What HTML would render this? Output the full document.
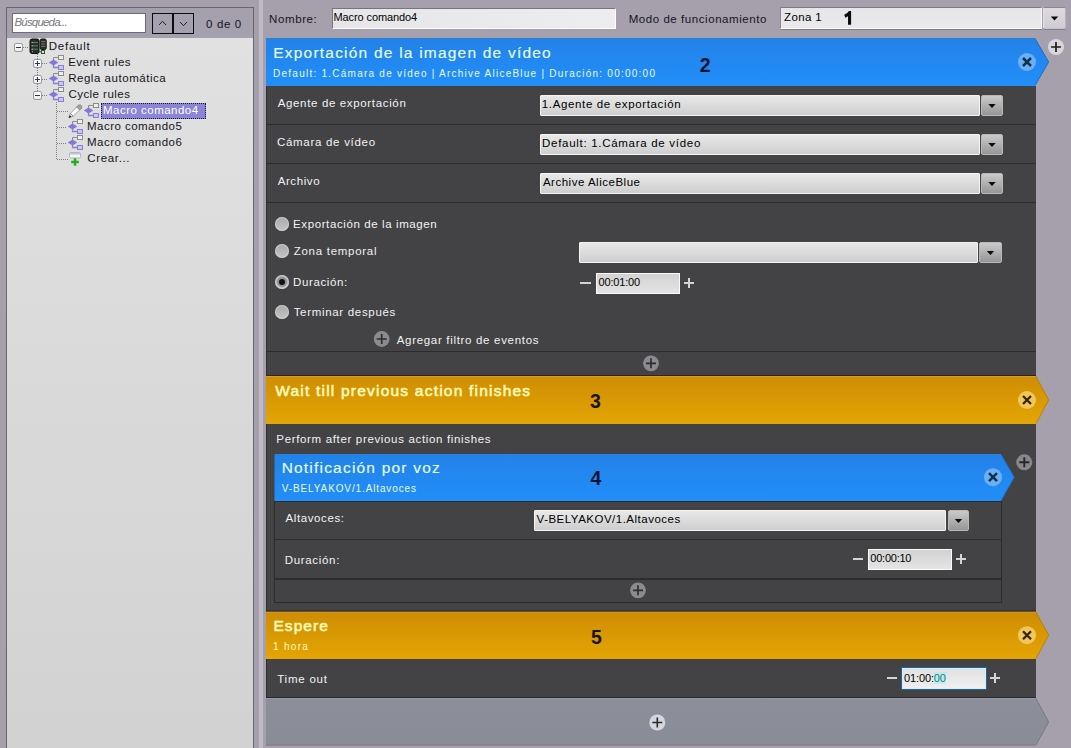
<!DOCTYPE html>
<html><head><meta charset="utf-8"><title>Macro</title>
<style>
html,body{margin:0;padding:0;}
body{width:1071px;height:748px;overflow:hidden;position:relative;background:#a5a0ac;font-family:"Liberation Sans", sans-serif;}
.t{position:absolute;white-space:pre;line-height:1;font-family:"Liberation Sans", sans-serif;}
.a{position:absolute;}

.band{background:#a4a0ad;}
.tree{background:linear-gradient(#e1e1e1,#d2d2d2);}
.inp{background:linear-gradient(90deg,#e6e6e8,#ededef);border:1px solid;border-color:#77747f #fdfdfd #fdfdfd #77747f;box-sizing:border-box;}
.cb{background:linear-gradient(#e8e8e8,#cecece);box-sizing:border-box;border:1px solid #f4f4f4;border-radius:1px;}
.cbb{background:linear-gradient(#cacaca,#969696);box-sizing:border-box;border:1px solid #b8b8b8;border-radius:2px;}
.cbl{background:linear-gradient(#e6e6e8,#eaeaec);box-sizing:border-box;border:1px solid;border-color:#7d7a85 #fdfdfd #fdfdfd #8a8792;border-radius:1px;box-shadow:0 1px 0 rgba(100,98,110,.55);}
.cblb{background:linear-gradient(#dddbe0,#cfcdd3);box-sizing:border-box;border:1px solid;border-color:#8a8792 #b9b6c0 #c4c2ca #e4e2e8;border-radius:2px;box-shadow:0 1px 0 rgba(100,98,110,.55);}
.sep{background:#2d2d2f;height:1px;}
.fld{background:linear-gradient(#d2d2d2,#e4e4e4);box-sizing:border-box;border:1px solid #fafafa;}
.eb{box-sizing:border-box;width:9px;height:9px;border:1px solid #9a9aa0;border-radius:2px;background:linear-gradient(#ffffff,#ececec);}
.dotv{width:1px;background-image:linear-gradient(#808080 50%,transparent 50%);background-size:1px 2px;}
.doth{height:1px;background-image:linear-gradient(90deg,#808080 50%,transparent 50%);background-size:2px 1px;}

</style></head><body>
<div class="a " style="left:6px;top:7px;width:248px;height:741px;background:#68656f;"></div>
<div class="a band" style="left:7px;top:8px;width:246px;height:30px;"></div>
<div class="a tree" style="left:7px;top:38px;width:246px;height:710px;"></div>
<div class="a " style="left:12px;top:13px;width:134px;height:20px;background:#fff;box-sizing:border-box;border:1px solid #6c6a74;"></div>
<div class="a " style="left:152px;top:13px;width:21px;height:21px;box-sizing:border-box;border:1px solid #0c0c10;background:#a5a1ae;"></div>
<div class="a " style="left:173px;top:13px;width:21px;height:21px;box-sizing:border-box;border:1px solid #0c0c10;background:#a5a1ae;"></div>
<svg class="a" style="left:0px;top:0px" width="1071" height="748" viewBox="0 0 1071 748"><path d="M159 25L162.5 21.3L166 25" stroke="#111" stroke-width="0.9" fill="none"/><path d="M180 22L183.5 25.7L187 22" stroke="#111" stroke-width="0.9" fill="none"/></svg>
<div class="a " style="left:259px;top:0px;width:4px;height:748px;background:#bfbcc8;"></div>
<div class="a doth" style="left:23px;top:47px;width:6px;height:1px;"></div>
<div class="a dotv" style="left:37px;top:54px;width:1px;height:38px;"></div>
<div class="a doth" style="left:42px;top:63px;width:6px;height:1px;"></div>
<div class="a doth" style="left:42px;top:79px;width:6px;height:1px;"></div>
<div class="a doth" style="left:42px;top:95px;width:6px;height:1px;"></div>
<div class="a dotv" style="left:56px;top:102px;width:1px;height:58px;"></div>
<div class="a doth" style="left:57px;top:111px;width:11px;height:1px;"></div>
<div class="a doth" style="left:57px;top:127px;width:10px;height:1px;"></div>
<div class="a doth" style="left:57px;top:143px;width:10px;height:1px;"></div>
<div class="a doth" style="left:57px;top:159px;width:11px;height:1px;"></div>
<div class="a eb" style="left:14px;top:43px;width:9px;height:9px;"></div><div class="a" style="left:16px;top:47px;width:5px;height:1px;background:#2c3a58"></div>
<div class="a eb" style="left:33px;top:59px;width:9px;height:9px;"></div><div class="a" style="left:35px;top:63px;width:5px;height:1px;background:#2c3a58"></div><div class="a" style="left:37px;top:61px;width:1px;height:5px;background:#2c3a58"></div>
<div class="a eb" style="left:33px;top:75px;width:9px;height:9px;"></div><div class="a" style="left:35px;top:79px;width:5px;height:1px;background:#2c3a58"></div><div class="a" style="left:37px;top:77px;width:1px;height:5px;background:#2c3a58"></div>
<div class="a eb" style="left:33px;top:91px;width:9px;height:9px;"></div><div class="a" style="left:35px;top:95px;width:5px;height:1px;background:#2c3a58"></div>
<svg class="a" style="left:28.8px;top:38px" width="18" height="17" viewBox="0 0 18 17"><rect x="1" y="1" width="9" height="14.5" rx="2" fill="#2a2e2a" stroke="#0c100c"/><rect x="11.2" y="1" width="6" height="10.5" rx="1.6" fill="#2e322e" stroke="#0c100c"/><path d="M2 4.5H9M2 7.8H9M2 11.2H9" stroke="#6e786e" stroke-width="1"/><path d="M12 3.6H16.5M12 6H16.5M12 8.4H16.5" stroke="#7e887e" stroke-width=".8"/><path d="M3 4.5h1M3 7.8h1M3 11.2h1M3 13.8h1" stroke="#7cd67c" stroke-width="1"/><path d="M10 13.8H12.5" stroke="#1e5e1e" stroke-width="1"/><rect x="12.5" y="12.5" width="3" height="3" fill="#d8f0d8" stroke="#1c5c1c"/></svg>
<svg class="a" style="left:48px;top:55px" width="17" height="16" viewBox="0 0 17 16"><path d="M5.5 5V2.5H10.5" stroke="#8e8e94" stroke-width="1" fill="none"/><path d="M5.5 10V12.5H10.5" stroke="#8a80d4" stroke-width="1.3" fill="none"/><path d="M0.7 7.5L5.5 4.4L10.3 7.5L5.5 10.6Z" fill="#8279d6"/><rect x="10.5" y="0.5" width="5" height="4" fill="#eeeeea" stroke="#8c8c90"/><rect x="10.5" y="10.5" width="5" height="4" fill="#cac2ff" stroke="#8a80d4"/></svg>
<svg class="a" style="left:48px;top:71px" width="17" height="16" viewBox="0 0 17 16"><path d="M5.5 5V2.5H10.5" stroke="#8e8e94" stroke-width="1" fill="none"/><path d="M5.5 10V12.5H10.5" stroke="#8a80d4" stroke-width="1.3" fill="none"/><path d="M0.7 7.5L5.5 4.4L10.3 7.5L5.5 10.6Z" fill="#8279d6"/><rect x="10.5" y="0.5" width="5" height="4" fill="#eeeeea" stroke="#8c8c90"/><rect x="10.5" y="10.5" width="5" height="4" fill="#cac2ff" stroke="#8a80d4"/></svg>
<svg class="a" style="left:48px;top:87px" width="17" height="16" viewBox="0 0 17 16"><path d="M5.5 5V2.5H10.5" stroke="#8e8e94" stroke-width="1" fill="none"/><path d="M5.5 10V12.5H10.5" stroke="#8a80d4" stroke-width="1.3" fill="none"/><path d="M0.7 7.5L5.5 4.4L10.3 7.5L5.5 10.6Z" fill="#8279d6"/><rect x="10.5" y="0.5" width="5" height="4" fill="#eeeeea" stroke="#8c8c90"/><rect x="10.5" y="10.5" width="5" height="4" fill="#cac2ff" stroke="#8a80d4"/></svg>
<svg class="a" style="left:83px;top:103px" width="17" height="16" viewBox="0 0 17 16"><path d="M5.5 5V2.5H10.5" stroke="#8e8e94" stroke-width="1" fill="none"/><path d="M5.5 10V12.5H10.5" stroke="#8a80d4" stroke-width="1.3" fill="none"/><path d="M0.7 7.5L5.5 4.4L10.3 7.5L5.5 10.6Z" fill="#8279d6"/><rect x="10.5" y="0.5" width="5" height="4" fill="#eeeeea" stroke="#8c8c90"/><rect x="10.5" y="10.5" width="5" height="4" fill="#cac2ff" stroke="#8a80d4"/></svg>
<svg class="a" style="left:67px;top:119px" width="17" height="16" viewBox="0 0 17 16"><path d="M5.5 5V2.5H10.5" stroke="#8e8e94" stroke-width="1" fill="none"/><path d="M5.5 10V12.5H10.5" stroke="#8a80d4" stroke-width="1.3" fill="none"/><path d="M0.7 7.5L5.5 4.4L10.3 7.5L5.5 10.6Z" fill="#8279d6"/><rect x="10.5" y="0.5" width="5" height="4" fill="#eeeeea" stroke="#8c8c90"/><rect x="10.5" y="10.5" width="5" height="4" fill="#cac2ff" stroke="#8a80d4"/></svg>
<svg class="a" style="left:67px;top:135px" width="17" height="16" viewBox="0 0 17 16"><path d="M5.5 5V2.5H10.5" stroke="#8e8e94" stroke-width="1" fill="none"/><path d="M5.5 10V12.5H10.5" stroke="#8a80d4" stroke-width="1.3" fill="none"/><path d="M0.7 7.5L5.5 4.4L10.3 7.5L5.5 10.6Z" fill="#8279d6"/><rect x="10.5" y="0.5" width="5" height="4" fill="#eeeeea" stroke="#8c8c90"/><rect x="10.5" y="10.5" width="5" height="4" fill="#cac2ff" stroke="#8a80d4"/></svg>
<svg class="a" style="left:68px;top:104px" width="15" height="15" viewBox="0 0 15 15"><path d="M2.4 9.4L10.4 1.2L13.4 4.2L5.2 12.2Z" fill="#fafafa" stroke="#8a8a8a" stroke-width=".7"/><path d="M8.6 3L10.4 1.2Q11.8 0 13.2 1.4Q14.4 2.8 13.4 4.2L11.6 6Z" fill="#a2a2a2" stroke="#6e6e6e" stroke-width=".6"/><path d="M0.8 13.8L2.4 9.4L5.2 12.2Z" fill="#e8e8e8" stroke="#555" stroke-width=".5"/><path d="M0.8 13.8L1.7 11.2L3.4 12.9Z" fill="#111"/></svg>
<svg class="a" style="left:67px;top:151px" width="17" height="17" viewBox="0 0 17 17"><rect x="2.5" y="1.5" width="11" height="5.5" rx="1.5" fill="#f4f4f8" stroke="#b4b4c0"/><path d="M3.2 2.8H12.8" stroke="#c4c4d0" stroke-width="1.6"/><path d="M8 7.2V14.8M4.2 11H11.8" stroke="#1eae1e" stroke-width="2.4"/></svg>
<div class="a " style="left:101px;top:103px;width:105px;height:16px;background:#8b85d8;box-sizing:border-box;border:1px dotted #1a1a30;"></div>
<div class="a inp" style="left:332px;top:8px;width:284px;height:21px;"></div>
<div class="a cbl" style="left:780px;top:7px;width:262px;height:22px;"></div><div class="a cblb" style="left:1043px;top:7px;width:23px;height:22px;"></div><svg class="a" style="left:0;top:0" width="1071" height="748"><path d="M1050.8 16.5L1058.2 16.5L1054.5 20.6Z" fill="#0c0c0c"/></svg>
<svg class="a" style="left:0px;top:0px" width="1071" height="748" viewBox="0 0 1071 748"><path d="M848 24.8V16.2L845.3 17.8L844.2 14.8Q847.6 13.4 849 11.1H851.1V24.8Z" fill="#0c0c12"/></svg>
<div class="a " style="left:266px;top:86px;width:770px;height:290px;background:#434345;"></div>
<svg class="a" style="left:0px;top:0px" width="1071" height="748" viewBox="0 0 1071 748"><defs><linearGradient id="bg1" x1="0" y1="0" x2="0" y2="1"><stop offset="0" stop-color="#2382e8"/><stop offset="1" stop-color="#228ef9"/></linearGradient></defs><path d="M266 38H1035L1049 62L1035 86H266Z" fill="url(#bg1)"/><path d="M266 38.5H1035" stroke="#2f7fd0" stroke-width="1"/><path d="M1035 38.5L1048.6 62L1035 85.5" stroke="#1c66bc" stroke-width="1" fill="none" opacity=".8"/><circle cx="1027" cy="62" r="9" fill="#6bb0f4"/><path d="M1023.0 58.0L1031.0 66.0M1031.0 58.0L1023.0 66.0" stroke="#14304e" stroke-width="2.5" stroke-linecap="butt" fill="none"/><circle cx="1056" cy="47" r="8" fill="#d8d6dd"/><path d="M1051.0 47L1061.0 47M1056 42.0L1056 52.0" stroke="#1c1c1c" stroke-width="1.7" fill="none"/></svg>
<div class="a sep" style="left:266px;top:124px;width:770px;height:1px;"></div>
<div class="a sep" style="left:266px;top:163px;width:770px;height:1px;"></div>
<div class="a sep" style="left:266px;top:202px;width:770px;height:1px;"></div>
<div class="a sep" style="left:266px;top:351px;width:770px;height:1px;"></div>
<div class="a cb" style="left:540px;top:95px;width:440px;height:21px;"></div><div class="a cbb" style="left:981px;top:95px;width:22px;height:21px;"></div><svg class="a" style="left:0;top:0" width="1071" height="748"><path d="M988.3 104.0L995.7 104.0L992.0 108.1Z" fill="#0c0c0c"/></svg>
<div class="a cb" style="left:540px;top:134px;width:440px;height:21px;"></div><div class="a cbb" style="left:981px;top:134px;width:22px;height:21px;"></div><svg class="a" style="left:0;top:0" width="1071" height="748"><path d="M988.3 143.0L995.7 143.0L992.0 147.1Z" fill="#0c0c0c"/></svg>
<div class="a cb" style="left:540px;top:173px;width:440px;height:21px;"></div><div class="a cbb" style="left:981px;top:173px;width:22px;height:21px;"></div><svg class="a" style="left:0;top:0" width="1071" height="748"><path d="M988.3 182.0L995.7 182.0L992.0 186.1Z" fill="#0c0c0c"/></svg>
<div class="a" style="left:275px;top:217px;width:14px;height:14px;border-radius:50%;background:linear-gradient(#a9a9a9,#c4c4c4);box-shadow:inset 0 0 0 1px rgba(225,225,225,.55);"></div>
<div class="a" style="left:275px;top:244px;width:14px;height:14px;border-radius:50%;background:linear-gradient(#a9a9a9,#c4c4c4);box-shadow:inset 0 0 0 1px rgba(225,225,225,.55);"></div>
<div class="a" style="left:275px;top:275px;width:14px;height:14px;border-radius:50%;background:linear-gradient(#a9a9a9,#c4c4c4);box-shadow:inset 0 0 0 1px rgba(225,225,225,.55);"></div><div class="a" style="left:277px;top:277px;width:10px;height:10px;border-radius:50%;background:#929292"></div><div class="a" style="left:279px;top:279px;width:6px;height:6px;border-radius:50%;background:#111"></div>
<div class="a" style="left:275px;top:305px;width:14px;height:14px;border-radius:50%;background:linear-gradient(#a9a9a9,#c4c4c4);box-shadow:inset 0 0 0 1px rgba(225,225,225,.55);"></div>
<div class="a cb" style="left:579px;top:242px;width:399px;height:21px;"></div><div class="a cbb" style="left:979px;top:242px;width:23px;height:21px;"></div><svg class="a" style="left:0;top:0" width="1071" height="748"><path d="M986.8 251.0L994.2 251.0L990.5 255.1Z" fill="#0c0c0c"/></svg>
<div class="a fld" style="left:596px;top:273px;width:84px;height:21px;"></div>
<div class="a" style="left:580px;top:282px;width:11px;height:2px;background:#d4d4d4"></div>
<div class="a" style="left:684px;top:282px;width:10px;height:2px;background:#d4d4d4"></div><div class="a" style="left:688.0px;top:278.0px;width:2px;height:10px;background:#d4d4d4"></div>
<svg class="a" style="left:0px;top:0px" width="1071" height="748" viewBox="0 0 1071 748"><circle cx="381.7" cy="339" r="7.9" fill="#8b8b8f"/><path d="M376.7 339L386.7 339M381.7 334.0L381.7 344.0" stroke="#2e2e30" stroke-width="1.7" fill="none"/><circle cx="651" cy="363.3" r="7.9" fill="#8b8b8f"/><path d="M646.0 363.3L656.0 363.3M651 358.3L651 368.3" stroke="#2e2e30" stroke-width="1.7" fill="none"/></svg>
<div class="a " style="left:266px;top:659px;width:770px;height:39px;background:#434345;"></div>
<div class="a " style="left:266px;top:424px;width:770px;height:188px;background:#434345;"></div>
<svg class="a" style="left:0px;top:0px" width="1071" height="748" viewBox="0 0 1071 748"><defs><linearGradient id="og" x1="0" y1="0" x2="0" y2="1"><stop offset="0" stop-color="#ce8d03"/><stop offset="1" stop-color="#e4a505"/></linearGradient><linearGradient id="gg" x1="0" y1="0" x2="0" y2="1"><stop offset="0" stop-color="#8c8e99"/><stop offset="1" stop-color="#8a8c97"/></linearGradient></defs><path d="M266 376H1036L1049 400L1036 424H266Z" fill="url(#og)"/><path d="M266 376.5H1036" stroke="#d9a44a" stroke-width="1" opacity=".75"/><path d="M266 375.5H1036" stroke="#2b2724" stroke-width="1"/><path d="M1036 376.5L1048.6 400L1036 423.5" stroke="#b07808" stroke-width="1" fill="none" opacity=".8"/><circle cx="1027" cy="400" r="9" fill="#f1c65a"/><path d="M1023.0 396.0L1031.0 404.0M1031.0 396.0L1023.0 404.0" stroke="#33260c" stroke-width="2.3" stroke-linecap="butt" fill="none"/><path d="M266 611.5H1036L1049 635.2L1036 659H266Z" fill="url(#og)"/><path d="M266 612H1036" stroke="#d9a44a" stroke-width="1" opacity=".75"/><path d="M266 611H1036" stroke="#2b2724" stroke-width="1"/><path d="M1036 612L1048.6 635.2L1036 658.5" stroke="#b07808" stroke-width="1" fill="none" opacity=".8"/><circle cx="1027" cy="635.2" r="9" fill="#f1c65a"/><path d="M1023.0 631.2L1031.0 639.2M1031.0 631.2L1023.0 639.2" stroke="#33260c" stroke-width="2.3" stroke-linecap="butt" fill="none"/><path d="M266 698H1036L1049 722L1036 745.5H266Z" fill="url(#gg)"/><path d="M1036 698.5L1048.6 722L1036 745" stroke="#75757f" stroke-width="1" fill="none" opacity=".85"/><path d="M266 697.5H1036" stroke="#2c2a30" stroke-width="1"/><path d="M266 698.5H1036" stroke="#9a98a4" stroke-width="1"/><path d="M266 745H1036" stroke="#7c7a85" stroke-width="1"/><circle cx="657.3" cy="722.5" r="8" fill="#d6d4dc"/><path d="M652.3 722.5L662.3 722.5M657.3 717.5L657.3 727.5" stroke="#2a2a2e" stroke-width="1.6" fill="none"/></svg>
<div class="a " style="left:266px;top:86px;width:1px;height:290px;background:#303032;"></div>
<div class="a " style="left:266px;top:424px;width:1px;height:187px;background:#303032;"></div>
<div class="a " style="left:266px;top:659px;width:1px;height:38px;background:#303032;"></div>
<div class="a " style="left:274px;top:501px;width:728px;height:102px;background:#434345;box-sizing:border-box;border:1px solid #2b2b2d;"></div>
<svg class="a" style="left:0px;top:0px" width="1071" height="748" viewBox="0 0 1071 748"><path d="M274.5 454H1001L1014.5 477.3L1001 501H274.5Z" fill="url(#bg1)"/><path d="M1001 454.5L1014.2 477.3L1001 500.5" stroke="#1c66bc" stroke-width="1" fill="none" opacity=".8"/><circle cx="993" cy="477.2" r="9" fill="#6bb0f4"/><path d="M989.0 473.2L997.0 481.2M997.0 473.2L989.0 481.2" stroke="#14304e" stroke-width="2.5" stroke-linecap="butt" fill="none"/><circle cx="1024.3" cy="462.3" r="8" fill="#88888c"/><path d="M1019.3 462.3L1029.3 462.3M1024.3 457.3L1024.3 467.3" stroke="#262628" stroke-width="1.9" fill="none"/><circle cx="638" cy="590.3" r="7.9" fill="#8b8b8f"/><path d="M633.0 590.3L643.0 590.3M638 585.3L638 595.3" stroke="#2e2e30" stroke-width="1.7" fill="none"/></svg>
<div class="a sep" style="left:275px;top:539px;width:726px;height:1px;"></div>
<div class="a sep" style="left:275px;top:578px;width:726px;height:2px;"></div>
<div class="a cb" style="left:534px;top:510px;width:412px;height:21px;"></div><div class="a cbb" style="left:948px;top:510px;width:21px;height:21px;"></div><svg class="a" style="left:0;top:0" width="1071" height="748"><path d="M954.8 519.0L962.2 519.0L958.5 523.1Z" fill="#0c0c0c"/></svg>
<div class="a fld" style="left:868px;top:549px;width:84px;height:21px;"></div>
<div class="a" style="left:853px;top:558px;width:10px;height:2px;background:#d4d4d4"></div>
<div class="a" style="left:956px;top:558px;width:10px;height:2px;background:#d4d4d4"></div><div class="a" style="left:960.0px;top:554.0px;width:2px;height:10px;background:#d4d4d4"></div>
<div class="a fld" style="left:901px;top:667px;width:86px;height:23px;border:1px solid #2a5f9f;box-shadow:inset 0 0 0 1px #cfeffb;background:linear-gradient(#e0e0e0,#f0f0f0);"></div>
<div class="a" style="left:887px;top:677px;width:10px;height:2px;background:#d4d4d4"></div>
<div class="a" style="left:990px;top:677px;width:10px;height:2px;background:#d4d4d4"></div><div class="a" style="left:994.0px;top:673.0px;width:2px;height:10px;background:#d4d4d4"></div>
<span class="t" style="left:14.54px;top:16.57px;font-size:11.5px;color:#7a7a80;letter-spacing:-0.829px;font-style:italic;">Búsqueda...</span>
<span class="t" style="left:206.08px;top:18.77px;font-size:11.5px;color:#15151c;letter-spacing:0.623px;">0 de 0</span>
<span class="t" style="left:48.84px;top:40.77px;font-size:11.5px;color:#15151c;letter-spacing:0.727px;">Default</span>
<span class="t" style="left:68.14px;top:56.77px;font-size:11.5px;color:#15151c;letter-spacing:0.497px;">Event rules</span>
<span class="t" style="left:68.14px;top:72.77px;font-size:11.5px;color:#15151c;letter-spacing:0.540px;">Regla automática</span>
<span class="t" style="left:68.42px;top:88.77px;font-size:11.5px;color:#15151c;letter-spacing:0.461px;">Cycle rules</span>
<span class="t" style="left:103.04px;top:104.77px;font-size:11.5px;color:#ffffff;letter-spacing:0.480px;">Macro comando4</span>
<span class="t" style="left:87.04px;top:120.77px;font-size:11.5px;color:#15151c;letter-spacing:0.457px;">Macro comando5</span>
<span class="t" style="left:87.04px;top:136.77px;font-size:11.5px;color:#15151c;letter-spacing:0.457px;">Macro comando6</span>
<span class="t" style="left:87.33px;top:152.77px;font-size:11.5px;color:#15151c;letter-spacing:0.640px;">Crear...</span>
<span class="t" style="left:269.04px;top:13.87px;font-size:11.5px;color:#15151c;letter-spacing:0.615px;">Nombre:</span>
<span class="t" style="left:333.57px;top:12.29px;font-size:11px;color:#000;letter-spacing:-0.115px;">Macro comando4</span>
<span class="t" style="left:628.64px;top:13.97px;font-size:11.5px;color:#15151c;letter-spacing:0.564px;">Modo de funcionamiento</span>
<span class="t" style="left:784.07px;top:12.17px;font-size:11.5px;color:#000;letter-spacing:0.378px;">Zona 1</span>
<span class="t" style="left:273.24px;top:44.88px;font-size:15.5px;color:#e2fdf2;letter-spacing:1.213px;-webkit-text-stroke:0.15px #e2fdf2;">Exportación de la imagen de vídeo</span>
<span class="t" style="left:273.05px;top:69.44px;font-size:10px;color:#e2fdf2;letter-spacing:1.244px;">Default: 1.Cámara de vídeo | Archive AliceBlue | Duración: 00:00:00</span>
<span class="t" style="left:699.81px;top:55.99px;font-size:19.5px;color:#0a1430;letter-spacing:0.000px;font-weight:bold;">2</span>
<span class="t" style="left:277.70px;top:98.07px;font-size:11.5px;color:#f2f2f2;letter-spacing:0.650px;">Agente de exportación</span>
<span class="t" style="left:276.93px;top:136.97px;font-size:11.5px;color:#f2f2f2;letter-spacing:0.713px;">Cámara de vídeo</span>
<span class="t" style="left:277.70px;top:175.97px;font-size:11.5px;color:#f2f2f2;letter-spacing:0.590px;">Archivo</span>
<span class="t" style="left:541.75px;top:98.97px;font-size:11.5px;color:#000;letter-spacing:0.646px;">1.Agente de exportación</span>
<span class="t" style="left:542.04px;top:137.87px;font-size:11.5px;color:#000;letter-spacing:0.706px;">Default: 1.Cámara de vídeo</span>
<span class="t" style="left:542.90px;top:176.87px;font-size:11.5px;color:#000;letter-spacing:0.515px;">Archive AliceBlue</span>
<span class="t" style="left:293.04px;top:218.87px;font-size:11.5px;color:#f2f2f2;letter-spacing:0.605px;">Exportación de la imagen</span>
<span class="t" style="left:293.67px;top:246.07px;font-size:11.5px;color:#f2f2f2;letter-spacing:0.729px;">Zona temporal</span>
<span class="t" style="left:293.04px;top:276.87px;font-size:11.5px;color:#f2f2f2;letter-spacing:0.610px;">Duración:</span>
<span class="t" style="left:293.67px;top:306.77px;font-size:11.5px;color:#f2f2f2;letter-spacing:0.686px;">Terminar después</span>
<span class="t" style="left:598.50px;top:277.09px;font-size:11px;color:#000;letter-spacing:-0.161px;">00:01:00</span>
<span class="t" style="left:396.70px;top:334.77px;font-size:11.5px;color:#f2f2f2;letter-spacing:0.688px;">Agregar filtro de eventos</span>
<span class="t" style="left:275.20px;top:382.78px;font-size:15.5px;color:#fffcb8;letter-spacing:1.215px;-webkit-text-stroke:0.55px #fffcb8;">Wait till previous action finishes</span>
<span class="t" style="left:590.02px;top:391.89px;font-size:19.5px;color:#1a1408;letter-spacing:0.000px;font-weight:bold;">3</span>
<span class="t" style="left:276.34px;top:433.87px;font-size:11.5px;color:#f2f2f2;letter-spacing:0.658px;">Perform after previous action finishes</span>
<span class="t" style="left:281.64px;top:459.78px;font-size:15.5px;color:#e2fdf2;letter-spacing:1.202px;-webkit-text-stroke:0.15px #e2fdf2;">Notificación por voz</span>
<span class="t" style="left:281.80px;top:483.83px;font-size:10px;color:#e2fdf2;letter-spacing:0.876px;">V-BELYAKOV/1.Altavoces</span>
<span class="t" style="left:590.41px;top:469.29px;font-size:19.5px;color:#0a1430;letter-spacing:0.000px;font-weight:bold;">4</span>
<span class="t" style="left:285.60px;top:512.97px;font-size:11.5px;color:#f2f2f2;letter-spacing:0.593px;">Altavoces:</span>
<span class="t" style="left:536.60px;top:513.67px;font-size:11.5px;color:#000;letter-spacing:0.497px;">V-BELYAKOV/1.Altavoces</span>
<span class="t" style="left:284.74px;top:554.67px;font-size:11.5px;color:#f2f2f2;letter-spacing:0.673px;">Duración:</span>
<span class="t" style="left:870.30px;top:553.19px;font-size:11px;color:#000;letter-spacing:-0.233px;">00:00:10</span>
<span class="t" style="left:273.44px;top:617.98px;font-size:15.5px;color:#fffcb8;letter-spacing:1.075px;-webkit-text-stroke:0.55px #fffcb8;">Espere</span>
<span class="t" style="left:273.10px;top:641.63px;font-size:10px;color:#fffcb8;letter-spacing:1.268px;">1 hora</span>
<span class="t" style="left:591.12px;top:627.69px;font-size:19.5px;color:#1a1408;letter-spacing:0.000px;font-weight:bold;">5</span>
<span class="t" style="left:277.17px;top:674.37px;font-size:11.5px;color:#f2f2f2;letter-spacing:0.784px;">Time out</span>
<span class="t" style="left:904.11px;top:672.69px;font-size:11px;color:#000;letter-spacing:-0.149px;">01:00:<span style="color:#0e8a84;background:rgba(150,232,236,.45)">00</span></span>
</body></html>
